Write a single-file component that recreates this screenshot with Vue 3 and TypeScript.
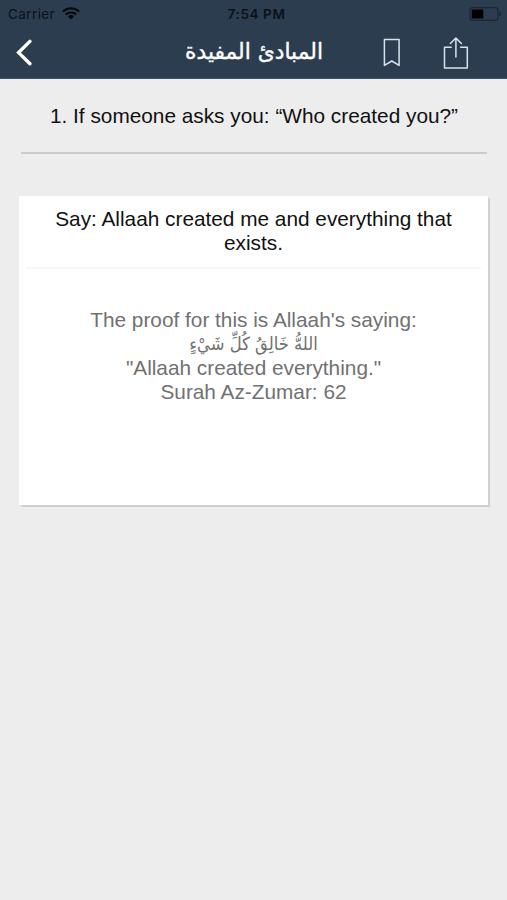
<script setup lang="ts">
const heading: string = 'المبادئ المفيدة'
const question: string = '1. If someone asks you: “Who created you?”'
const answer: string[] = ['Say: Allaah created me and everything that', 'exists.']
const verse: string = 'اللهُّ خَالِقُ كُلِّ شَيْءٍ'
</script>

<template>
  <div class="screen">
    <header class="top">
      <div class="status">
        <div class="carrier">
          <span>Carrier</span>
          <svg class="wifi" width="18" height="13" viewBox="0 0 18 13">
            <path d="M1 4.6 A11.4 11.4 0 0 1 17 4.6 M3.8 7.6 A7.4 7.4 0 0 1 14.2 7.6" fill="none" stroke="#05080b" stroke-width="2.1" />
            <path d="M6 9.5 A4.4 4.4 0 0 1 12 9.5 L9 12.5 Z" fill="#05080b" />
          </svg>
        </div>
        <span class="time">7:54 PM</span>
        <svg class="battery" width="33" height="14" viewBox="0 0 33 14">
          <rect x="0.9" y="0.7" width="28" height="12.6" rx="2.6" fill="none" stroke="#1a2632" stroke-width="1.2" />
          <rect x="2.7" y="2.4" width="11.6" height="9.2" rx="0.6" fill="#000" />
          <path d="M30.4 4.8 Q32.2 5.4 32.2 7 Q32.2 8.6 30.4 9.2 Z" fill="#1a2632" />
        </svg>
      </div>
      <div class="nav">
        <svg class="back" width="18" height="28" viewBox="0 0 18 28">
          <path d="M14.9 2.4 L3.6 13.6 L14.9 24.8" fill="none" stroke="#fff" stroke-width="3.4" stroke-linecap="round" />
        </svg>
        <h1 class="heading" dir="rtl"><span>{{ heading }}</span></h1>
        <svg class="bookmark" width="18" height="30" viewBox="0 0 18 30">
          <path d="M1.4 1.5 H16.1 V27.4 L8.8 23 L1.4 27.4 Z" fill="none" stroke="#d8e3ee" stroke-width="1.5" stroke-linejoin="round" />
        </svg>
        <svg class="share" width="26" height="34" viewBox="0 0 26 34">
          <path d="M8.2 11.3 H1.5 V32 H24.3 V11.3 H17.6 M12.9 21 V2.2 M7.4 7.5 L12.9 2 L18.4 7.5" fill="none" stroke="#d8e3ee" stroke-width="1.5" stroke-linejoin="round" stroke-linecap="round" />
        </svg>
      </div>
    </header>
    <main>
      <p class="question">{{ question }}</p>
      <section class="card">
        <p class="answer"><span v-for="line in answer" :key="line">{{ line }}</span></p>
        <div class="proof">
          <span>The proof for this is Allaah's saying:</span>
          <span class="verse" dir="rtl">{{ verse }}</span>
          <span>"Allaah created everything."</span>
          <span>Surah Az-Zumar: 62</span>
        </div>
      </section>
    </main>
  </div>
</template>

<style>
body {
  background: #ededed;
}
</style>

<style scoped>
.screen {
  min-height: 900px;
  background: #ededed;
  font-family: "Liberation Sans", sans-serif;
}
.top {
  height: 79px;
  box-sizing: border-box;
  background: #2c3d4f;
  border-bottom: 1px solid #3d536b;
}
.status {
  display: grid;
  grid-template-columns: 1fr auto 1fr;
  align-items: center;
  height: 27px;
  padding: 0 5px 0 8px;
  font-family: Inter, sans-serif;
  font-size: 13.5px;
  color: #0b1118;
}
.carrier {
  display: flex;
  align-items: center;
  gap: 7px;
  letter-spacing: 0.4px;
}
.time {
  padding-left: 3px;
  font-weight: 600;
  letter-spacing: 0.6px;
}
.battery {
  justify-self: end;
}
.nav {
  display: flex;
  align-items: center;
  height: 51px;
  padding: 0 37px 0 15px;
}
.heading {
  display: flex;
  justify-content: center;
  width: 140px;
  margin: -2px 59px 0 151px;
  font-family: "DejaVu Sans", sans-serif;
  font-size: 21.8px;
  line-height: 24px;
  font-weight: 400;
  white-space: nowrap;
  color: #fff;
  -webkit-text-stroke: 0.4px #fff;
}
.share {
  margin-left: 42px;
}
main {
  padding: 0 19px;
}
.question {
  margin: 0 1px 0 2px;
  padding: 25px 0 24px;
  border-bottom: 2px solid #cbcbcb;
  text-align: center;
  font-size: 20.8px;
  line-height: 24px;
  color: #111;
  white-space: nowrap;
}
.card {
  box-sizing: border-box;
  width: 469px;
  height: 309px;
  margin-top: 42px;
  background: #fff;
  box-shadow: 1px 1px 1px 0.5px #cfcfcf;
}
.answer {
  display: flex;
  flex-direction: column;
  align-items: center;
  margin: 0 7px;
  padding: 11px 0 12px;
  border-bottom: 2px solid #f8f8f8;
  font-size: 20.8px;
  line-height: 24px;
  color: #111;
  white-space: nowrap;
}
.proof {
  display: flex;
  flex-direction: column;
  align-items: center;
  padding-top: 39px;
  font-size: 20.8px;
  line-height: 24px;
  color: #717171;
  white-space: nowrap;
}
.verse {
  height: 24px;
  font-family: "DejaVu Sans", sans-serif;
  font-size: 18px;
  transform: scaleX(0.91);
}
</style>
